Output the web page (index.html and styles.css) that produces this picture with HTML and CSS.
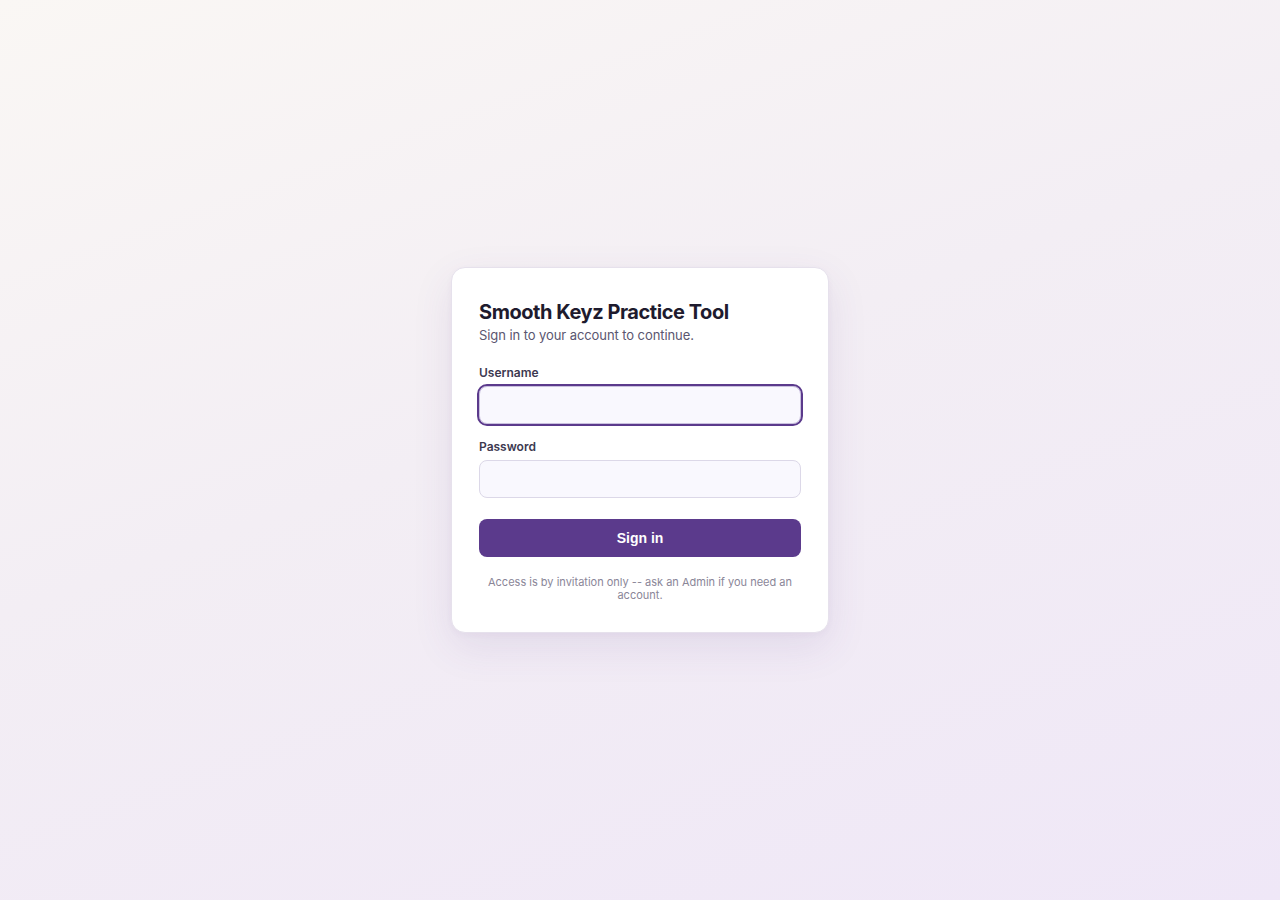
FILE: index.html
```html
<!DOCTYPE html>
<html lang="en">
<head>
<meta charset="utf-8">
<title>Smooth Keyz Practice Tool — Sign in</title>
<link rel="stylesheet" href="styles.css">
</head>
<body>
<main class="page">
  <form class="card" onsubmit="return false">
    <h1 class="title">Smooth Keyz Practice Tool</h1>
    <p class="subtitle">Sign in to your account to continue.</p>
    <div class="field field-first">
      <label class="label" for="username">Username</label>
      <input class="input is-focused" id="username" type="text" autocomplete="username">
    </div>
    <div class="field field-second">
      <label class="label" for="password">Password</label>
      <input class="input" id="password" type="password" autocomplete="current-password">
    </div>
    <button class="btn" type="submit">Sign in</button>
    <p class="note">Access is by invitation only -- ask an Admin if you need an account.</p>
  </form>
</main>
</body>
</html>
```
FILE: styles.css
```css
* { box-sizing: border-box; }
html, body { margin: 0; padding: 0; height: 100%; }
body {
  font-family: Inter, "Noto Sans", "Liberation Sans", sans-serif;
  background: linear-gradient(160deg, #faf7f4 0%, #f3eef4 45%, #efe7f7 100%);
  color: #1e1b2e;
}
.page {
  min-height: 900px;
  display: flex;
  align-items: center;
  justify-content: center;
}
.card {
  width: 378px;
  background: #ffffff;
  border: 1px solid #e6e1ec;
  border-radius: 14px;
  padding: 28px 27px 30px;
  box-shadow: 0 14px 40px rgba(90, 60, 140, 0.10), 0 2px 6px rgba(90, 60, 140, 0.04);
  display: flex;
  flex-direction: column;
}
.title {
  margin: 3px 0 0;
  font-size: 20px;
  line-height: 26px;
  font-weight: 700;
  color: #1e1b2e;
  letter-spacing: -0.45px;
}
.subtitle {
  margin: 1px 0 0;
  font-size: 13px;
  line-height: 18px;
  color: #5a5670;
  letter-spacing: -0.08px;
}
.field {
  display: flex;
  flex-direction: column;
}
.field-first { margin-top: 21px; gap: 5px; }
.field-second { margin-top: 15px; gap: 5px; }
.label {
  font-size: 12px;
  line-height: 16px;
  font-weight: 600;
  color: #3d3950;
}
.input {
  height: 38px;
  width: 100%;
  border: 1px solid #dcd8e8;
  border-radius: 8px;
  background: #f9f8fe;
  font: inherit;
  font-size: 14px;
  padding: 0 12px;
  color: #1e1b2e;
  outline: none;
}
.input.is-focused, .input:focus {
  border-color: #c9c0de;
  outline: 2px solid #5b3a8c;
  outline-offset: 0;
}
.btn {
  margin-top: 21px;
  height: 38px;
  width: 100%;
  border: 0;
  border-radius: 8px;
  background: #5b3a8c;
  color: #ffffff;
  font-family: "Liberation Sans", Arial, sans-serif;
  font-size: 14px;
  font-weight: 700;
  cursor: pointer;
}
.note {
  margin: 19px 0 0;
  font-size: 11px;
  line-height: 13px;
  text-align: center;
  color: #8a8698;
}
```
